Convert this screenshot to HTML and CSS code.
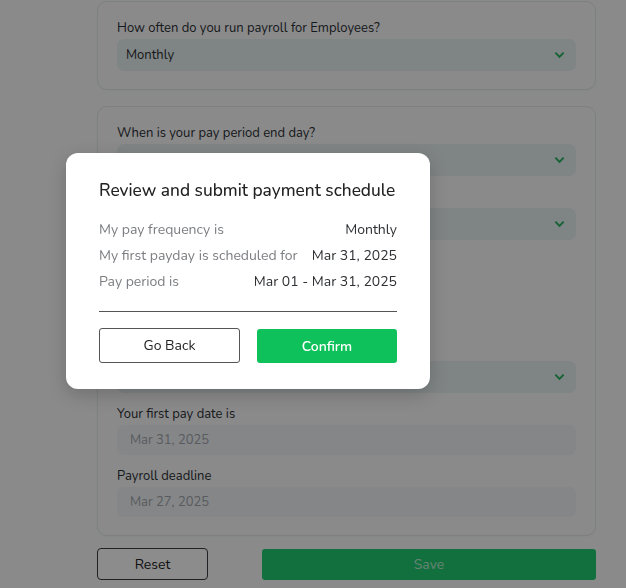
FILE: index.html
```html
<!DOCTYPE html>
<html lang="en">
<head>
    <meta charset="UTF-8">
    <meta name="viewport" content="width=device-width, initial-scale=1.0">
    <title>Payroll schedule</title>
<link rel="stylesheet" href="styles.css">
</head>
<body>
    <div id="page">
        <section class="card">
            <div class="field">
                <label>How often do you run payroll for Employees?</label>
                <div class="select">
                    <span>Monthly</span>
                    <svg class="chevron" viewBox="0 0 12 8"><path d="M1.5 1.5 6 6l4.5-4.5"/></svg>
                </div>
            </div>
        </section>
        <section class="card">
            <div class="field">
                <label>When is your pay period end day?</label>
                <div class="select">
                    <span>Last day of the month</span>
                    <svg class="chevron" viewBox="0 0 12 8"><path d="M1.5 1.5 6 6l4.5-4.5"/></svg>
                </div>
            </div>
            <div class="field">
                <label>When does your first pay period start?</label>
                <div class="select">
                    <span>Mar 01, 2025</span>
                    <svg class="chevron" viewBox="0 0 12 8"><path d="M1.5 1.5 6 6l4.5-4.5"/></svg>
                </div>
            </div>
            <div class="field">
                <label>Pay period</label>
                <p class="hint">Employees will be paid for the days worked between the start and the end of each pay period.</p>
            </div>
            <div class="field">
                <label>When do you pay your employees?</label>
                <div class="select">
                    <span>Last day of the month</span>
                    <svg class="chevron" viewBox="0 0 12 8"><path d="M1.5 1.5 6 6l4.5-4.5"/></svg>
                </div>
            </div>
            <div class="field">
                <label>Your first pay date is</label>
                <div class="input">Mar 31, 2025</div>
            </div>
            <div class="field">
                <label>Payroll deadline</label>
                <div class="input">Mar 27, 2025</div>
            </div>
        </section>
        <div class="actions">
            <button class="btn-reset">Reset</button>
            <button class="btn-save">Save</button>
        </div>
    </div>

    <div class="overlay"></div>

    <div class="modal">
        <h2>Review and submit payment schedule</h2>
        <div class="rows">
            <div class="row"><span>My pay frequency is</span><b>Monthly</b></div>
            <div class="row"><span>My first payday is scheduled for</span><b>Mar 31, 2025</b></div>
            <div class="row"><span>Pay period is</span><b>Mar 01 - Mar 31, 2025</b></div>
        </div>
        <hr>
        <div class="modal-buttons">
            <button class="btn-back">Go Back</button>
            <button class="btn-confirm">Confirm</button>
        </div>
    </div>
</body>
</html>
```

FILE: styles.css
```css
body {
    margin: 0;
    padding: 0;
    background: #fbfcfd;
    font-family: "Nunito", "Lato", "Open Sans", sans-serif;
    color: #2b2f33;
}

#page {
    width: 499px;
    margin-left: 97px;
    padding-top: 1px;
}

.card {
    border: 1px solid #e4e7ea;
    border-radius: 10px;
    padding: 17px 19px 18px;
    margin-bottom: 16px;
    box-shadow: 0 1px 3px rgba(0, 0, 0, 0.04);
}

.field {
    margin-bottom: 12px;
}
.field:last-child {
    margin-bottom: 0;
}

.field label {
    display: block;
    font-size: 13px;
    line-height: 18px;
    margin-bottom: 2px;
}

.select {
    height: 32px;
    background: #e7f0f0;
    border-radius: 7px;
    display: flex;
    align-items: center;
    justify-content: space-between;
    padding: 0 11px 0 9px;
    font-size: 13px;
}

.chevron {
    width: 11px;
    height: 8px;
    fill: none;
    stroke: #22b35c;
    stroke-width: 2;
}

.hint {
    margin: 0;
    width: 200px;
    height: 57px;
    overflow: hidden;
    font-size: 13px;
    line-height: 18px;
    color: #667;
}

.input {
    height: 30px;
    background: #f2f5f8;
    border-radius: 6px;
    display: flex;
    align-items: center;
    padding-left: 13px;
    font-size: 13px;
    color: #a3a7ad;
}

.actions {
    display: flex;
    justify-content: space-between;
    margin-top: -4px;
}

button {
    font-family: inherit;
    font-size: 14px;
    cursor: pointer;
}

.btn-reset {
    width: 111px;
    height: 32px;
    background: #fff;
    border: 1px solid #3a3d42;
    border-radius: 4px;
    color: #222;
}

.btn-save {
    width: 334px;
    height: 31px;
    margin-top: 1px;
    background: #21cc72;
    border: none;
    border-radius: 3px;
    color: rgba(255, 255, 255, 0.7);
}

.overlay {
    position: fixed;
    inset: 0;
    background: rgba(0, 0, 0, 0.45);
}

.modal {
    position: absolute;
    left: 66px;
    top: 153px;
    width: 298px;
    padding: 28px 33px 26px;
    background: #fff;
    border-radius: 12px;
    box-shadow: 0 6px 18px rgba(0, 0, 0, 0.18);
}

.modal h2 {
    margin: 0 0 16px;
    font-size: 17.3px;
    line-height: 20px;
    font-weight: 500;
    white-space: nowrap;
    color: #222;
}

.row {
    display: flex;
    justify-content: space-between;
    font-size: 14px;
    line-height: 26px;
}
.row span {
    color: #7b7d80;
}
.row b {
    font-weight: 400;
    color: #2e3033;
}

.modal hr {
    margin: 16px 0 16px;
    border: none;
    border-top: 1px solid #555;
}

.modal-buttons {
    display: flex;
    justify-content: space-between;
}

.btn-back {
    width: 141px;
    height: 35px;
    background: #fff;
    border: 1px solid #555;
    border-radius: 3px;
    color: #222;
}

.btn-confirm {
    width: 140px;
    height: 34px;
    margin-top: 1px;
    background: #0fc15a;
    border: none;
    border-radius: 3px;
    color: #fff;
    font-weight: 600;
}
```
